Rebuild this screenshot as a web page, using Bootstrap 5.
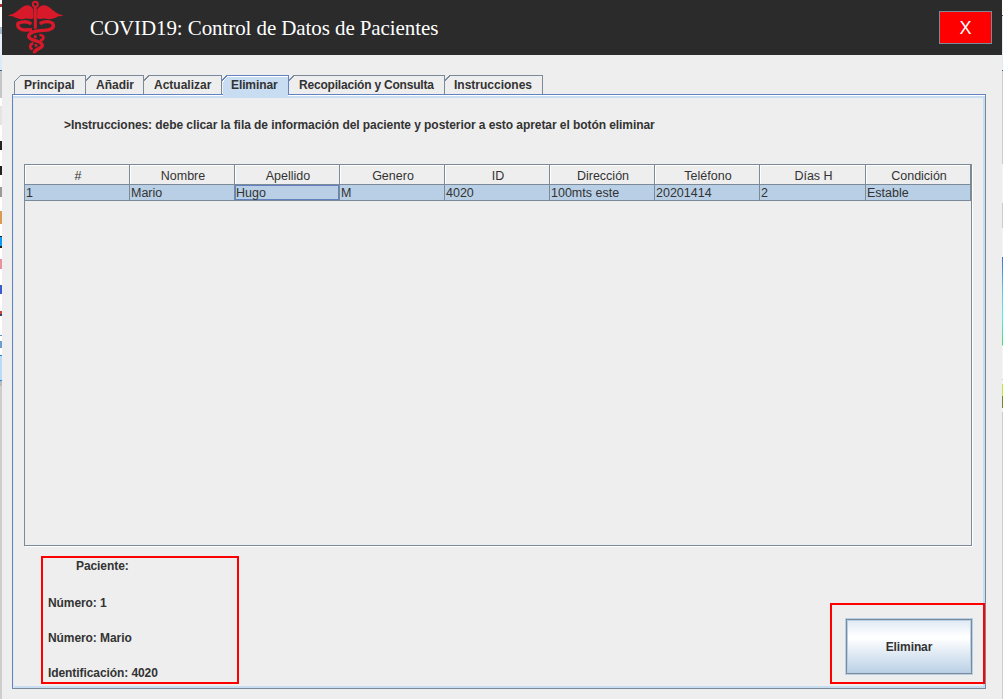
<!DOCTYPE html>
<html lang="es">
<head>
<meta charset="utf-8">
<title>COVID19: Control de Datos de Pacientes</title>
<link href="https://cdn.jsdelivr.net/npm/bootstrap@5.3.0/dist/css/bootstrap.min.css" rel="stylesheet">
<script src="https://cdn.jsdelivr.net/npm/bootstrap@5.3.0/dist/js/bootstrap.bundle.min.js"></script>
<style>
body{font:12px/14px "Liberation Sans",Arial,sans-serif;color:#333;background:#fff;width:1003px;height:699px}
.edge-l{width:2px;background:linear-gradient(#fff 0 4px,#a33 4px 7px,#fff 7px 27px,#a9bccb 27px 34px,#e6eff9 34px 55px,#dce9f7 55px 70px,#36649b 70px 71px,#c6c6c6 71px 98px,#fff 98px 106px,#e4e4e4 106px 125px,#fff 125px 141px,#222 141px 150px,#fff 150px 166px,#222 166px 175px,#fff 175px 187px,#999 187px 197px,#fff 197px 211px,#d99a55 211px 224px,#fff 224px 236px,#222 236px 237px,#0b9af3 237px 246px,#222 246px 248px,#fff 248px 259px,#e9929f 259px 269px,#fff 269px 285px,#3c5ad0 285px 294px,#fff 294px 311px,#c44 311px 314px,#346 314px 316px,#fff 316px 335px,#5a94cf 335px 336px,#fff 336px 341px,#6c9dce 341px 348px,#fff 348px 355px,#2582d0 355px 356px,#b8dcf8 356px 380px,#2582d0 380px 381px,#bbb 381px 386px,#cecece 386px)}
.edge-r{width:1px;background:linear-gradient(#fff 0 15px,#36649b 15px 16px,#e3edf9 16px 70px,#36649b 70px 71px,#ccc 71px 164px,#f4f4f4 164px 203px,#ccc 203px 228px,#f4f4f4 228px 257px,#3c6fd8 257px,#5cc4ec 290px,#5ee 315px,#3fe070 345px,#f4f4f4 346px 379px,#ccc 379px 380px,#f4f4f4 380px 384px,#b9ec3f 384px 396px,#718a32 396px 408px,#f4f4f4 408px 412px,#ccc 412px)}
.app-window{background:#eee}
.title-bar{height:55px;background:#2b2b2b}
.title-bar svg{margin-left:6px}
.title-bar h1{font:21px/24px "Liberation Serif","Times New Roman",serif;letter-spacing:-.09px;color:#fff;margin:0 0 0 26px}
.close-btn,.close-btn:hover{width:53px;height:33px;border:1px solid #7a8a99;border-radius:0;background:#f00;color:#fff;font:18px/20px "Liberation Sans",Arial,sans-serif;margin:0 10px 0 0}
.tab-strip{height:19px;margin:20px 0 0 12px}
.tab-strip .outline{left:0;top:0}
.tab-strip button{font:bold 12px/20px "Liberation Sans",Arial,sans-serif;color:#333;padding:0 0 0 10px;height:19px;border:0;background:none;text-align:left}
.pane{width:974px;height:595px;margin-left:10px;border:1px solid #7a8a99;border-top-color:#6382bf;border-left-color:#6382bf;box-shadow:inset 0 1px #fff,inset 0 3px #c8ddf2,inset 1px 0 #e0ebf6,inset -2px 0 #c8ddf2,inset 0 -2px #c8ddf2}
.hint{margin:23px 0 0 51px;height:16px;letter-spacing:-.066px}
.grid-frame{width:948px;height:382px;margin:30px 0 0 11px;border:1px solid #7a8a99;box-shadow:1px 1px #fff}
.patients{width:946px;table-layout:fixed;margin:0;border-collapse:separate;border-spacing:0;color:#333;font-size:12.5px}
.patients th{height:20px;padding:2px 0 0 2px;font-weight:400;text-align:center;border-right:1px solid #7a8a99;border-bottom:1px solid #7a8a99;box-shadow:inset 1px 1px #fff;line-height:16px}
.patients td{height:16px;padding:1px 0 0 1px;background:#b8cfe5;border-right:1px solid #7a8a99;border-bottom:1px solid #7a8a99;line-height:14px}
.patients td.active-cell{box-shadow:inset 0 0 0 1px #6382bf}
.red-box{border:2px solid #f00}
.summary{width:198px;height:128px;margin:10px 0 0 28px;padding:1px 5px;letter-spacing:-.08px}
.summary p{margin:0 0 21px}
.action{width:155px;height:81px;margin:57px 0 0;padding:13px 0 0 13px}
.delete-btn{width:128px;height:57px;border:1px solid #b8cfe5;border-radius:0;box-shadow:inset 0 0 0 1px #7a8a99,inset 0 0 0 2px #b8cfe5;background:linear-gradient(#dde8f3,#fff 32%,#fff 34%,#b8cfe5);font:bold 12px/14px "Liberation Sans",Arial,sans-serif;letter-spacing:-.1px;color:#333;padding:0}
</style>
</head>
<body class="d-flex overflow-hidden">
<div class="edge-l flex-shrink-0"></div>
<main class="app-window flex-grow-1">
  <header class="title-bar d-flex align-items-center">
    <svg width="56" height="55" viewBox="12 0 168 165" class="flex-shrink-0" fill="none" stroke="#d8192a" stroke-width="10">
      <path d="M12 46C30 44 42 32 54 22C68 10 82 16 88 28L89 54C82 60 72 54 62 56L54 58C44 58 42 54 38 54C30 54 30 49 26 49C20 49 16 48 12 46ZM178 46C160 44 148 32 136 22C122 10 106 16 100 28L99 54C106 60 116 54 126 56L134 58C144 58 148 54 152 54C158 54 160 49 164 49C170 49 174 48 178 46Z" fill="#d8192a" stroke="none"/>
      <circle cx="94" cy="13" r="7.5" stroke-width="6"/>
      <path d="M94 20V86" stroke-width="9"/>
      <path d="M82 72C70 62 52 66 42 70C38 82 50 90 64 90L84 89M108 72C118 62 138 64 146 70C154 84 138 91 120 91C98 92 76 94 74 109C74 124 114 120 115 136C115 148 91 144 91 160"/>
      <path d="M106 105C122 105 122 119 108 122M88 129C76 133 76 145 86 148M94 106V115M96 132V140" stroke-width="8"/>
    </svg>
    <h1>COVID19: Control de Datos de Pacientes</h1>
    <button class="close-btn btn ms-auto p-0">X</button>
  </header>
  <nav class="tab-strip d-flex position-relative">
    <svg class="outline position-absolute" width="532" height="24" fill="none" stroke="#7a8a99" shape-rendering="crispEdges">
      <path d="M.5 19V6.5L6.5 .5H71.5V19M72 5.5L77 .5H129.5V19M130 5.5L135 .5H207.5V19M275 5.5L280 .5H430.5V19M431 5.5L436 .5H528.5V19"/>
      <path d="M209 22V5L213 1H274V22Z" fill="#c8ddf2" stroke="none"/>
      <path d="M209 6.5L213 1.5H274" stroke="#fff"/>
      <path d="M208 5.5L213 .5H274.5V19" stroke="#6382bf"/>
    </svg>
    <button class="position-relative" style="width:72px">Principal</button>
    <button class="position-relative" style="width:58px">Añadir</button>
    <button class="position-relative" style="width:78px">Actualizar</button>
    <button class="position-relative" style="width:66px;padding-left:9px;letter-spacing:-.1px">Eliminar</button>
    <button class="position-relative text-nowrap" style="width:156px;padding-left:11px;letter-spacing:-.2px">Recopilación y Consulta</button>
    <button class="position-relative" style="width:98px">Instrucciones</button>
  </nav>
  <section class="pane overflow-hidden">
    <p class="hint fw-bold text-nowrap">&gt;Instrucciones: debe clicar la fila de información del paciente y posterior a esto apretar el botón eliminar</p>
    <div class="grid-frame">
      <table class="patients">
        <colgroup><col span="7" style="width:105px"><col style="width:106px"><col style="width:105px"></colgroup>
        <thead><tr><th>#</th><th>Nombre</th><th>Apellido</th><th>Genero</th><th>ID</th><th>Dirección</th><th>Teléfono</th><th>Días H</th><th>Condición</th></tr></thead>
        <tbody><tr><td>1</td><td>Mario</td><td class="active-cell">Hugo</td><td>M</td><td>4020</td><td>100mts este</td><td>20201414</td><td>2</td><td>Estable</td></tr></tbody>
      </table>
    </div>
    <div class="d-flex justify-content-between">
      <div class="summary red-box fw-bold">
        <p style="padding-left:28px;margin-bottom:23px">Paciente:</p>
        <p>Número: 1</p>
        <p>Número: Mario</p>
        <p>Identificación: 4020</p>
      </div>
      <div class="action red-box">
        <button class="delete-btn">Eliminar</button>
      </div>
    </div>
  </section>
</main>
<div class="edge-r flex-shrink-0"></div>
</body>
</html>
